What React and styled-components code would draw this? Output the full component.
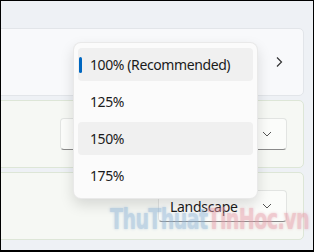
import React from "react";
import styled, { createGlobalStyle } from "styled-components";

const Global = createGlobalStyle`
  html, body { margin: 0; padding: 0; background: #fff; }
  body { font-family: "Noto Sans", "Open Sans", sans-serif; }
`;

const Page = styled.div`
  position: relative;
  width: 314px;
  height: 252px;
  box-sizing: border-box;
  border: 1px solid #000;
  border-bottom-width: 2px;
  background: #eef1f5;
  overflow: hidden;
`;

const Stack = styled.div`
  display: flex;
  flex-direction: column;
  gap: 4px;
  padding-top: 27px;
  margin-left: -10px;
  margin-right: 9px;
`;

const Card = styled.div`
  box-sizing: border-box;
  height: 68px;
  display: flex;
  align-items: center;
  justify-content: flex-end;
  padding-right: ${(p) => p.$pr || 16}px;
  background: ${(p) => (p.$tint ? "#f6f8f4" : "#f8f9fb")};
  border: 1px solid ${(p) => (p.$tint ? "#dde6d7" : "#e2e5e9")};
  border-radius: 5px;
`;

const Combo = styled.div`
  box-sizing: border-box;
  width: ${(p) => p.$w}px;
  height: 32px;
  display: flex;
  align-items: center;
  justify-content: space-between;
  padding: 0 14px 0 11px;
  background: #fbfcfa;
  border: 1px solid #e2e4e2;
  border-bottom-color: #8a8a8a;
  border-radius: 4px;
  font-size: 14px;
  letter-spacing: -0.3px;
  color: #1b1b1b;
`;

const Menu = styled.div`
  position: absolute;
  left: 72px;
  top: 41px;
  width: 185px;
  box-sizing: border-box;
  padding: 5px 4px 6px 4px;
  background: #fbfbfb;
  border: 1px solid rgba(0, 0, 0, 0.07);
  border-radius: 8px;
  box-shadow: 0 6px 14px rgba(0, 0, 0, 0.13);
  display: flex;
  flex-direction: column;
  gap: 4px;
  z-index: 2;
`;

const Item = styled.div`
  position: relative;
  height: 33px;
  display: flex;
  align-items: center;
  padding-left: 12px;
  border-radius: 4px;
  background: ${(p) => (p.$active ? "#f0f0f0" : "transparent")};
  font-size: 14px;
  color: #1b1b1b;
  letter-spacing: -0.4px;
`;

const Accent = styled.span`
  position: absolute;
  left: 1px;
  top: 9px;
  width: 3px;
  height: 16px;
  border-radius: 2px;
  background: #0067c0;
`;

const Watermark = styled.div`
  position: absolute;
  left: 109px;
  top: 201px;
  font-family: "DejaVu Sans Condensed", "DejaVu Sans", sans-serif;
  font-weight: bold;
  font-size: 29px;
  letter-spacing: -0.8px;
  transform: scaleX(0.73);
  transform-origin: left top;
  white-space: nowrap;
  opacity: 0.5;
  z-index: 3;
  pointer-events: none;
`;

const Mark = styled.span`
  color: ${(p) => p.$c};
  text-shadow: 0 0 3px ${(p) => p.$c};
`;

const Chevron = ({ dir }) =>
  dir === "right" ? (
    <svg width="8" height="12" viewBox="0 0 8 12">
      <path d="M2 1.5 L6.5 6 L2 10.5" fill="none" stroke="#333" strokeWidth="1.2" />
    </svg>
  ) : (
    <svg width="10" height="6" viewBox="0 0 10 6">
      <path d="M1 1 L5 5 L9 1" fill="none" stroke="#555" strokeWidth="1" />
    </svg>
  );

export default function App() {
  return (
    <>
      <Global />
      <Page>
        <Stack>
          <Card $pr={20}>
            <Chevron dir="right" />
          </Card>
          <Card $tint>
            <Combo $w={227}>
              <span>100%</span>
              <Chevron dir="down" />
            </Combo>
          </Card>
          <Card $tint>
            <Combo $w={129}>
              <span>Landscape</span>
              <Chevron dir="down" />
            </Combo>
          </Card>
        </Stack>
        <Menu>
          <Item $active>
            <Accent />
            100% (Recommended)
          </Item>
          <Item>125%</Item>
          <Item $active>150%</Item>
          <Item>175%</Item>
        </Menu>
        <Watermark>
          <Mark $c="#8db3d6">ThuThuat</Mark>
          <Mark $c="#e59aa6">TinHoc.vn</Mark>
        </Watermark>
      </Page>
    </>
  );
}
